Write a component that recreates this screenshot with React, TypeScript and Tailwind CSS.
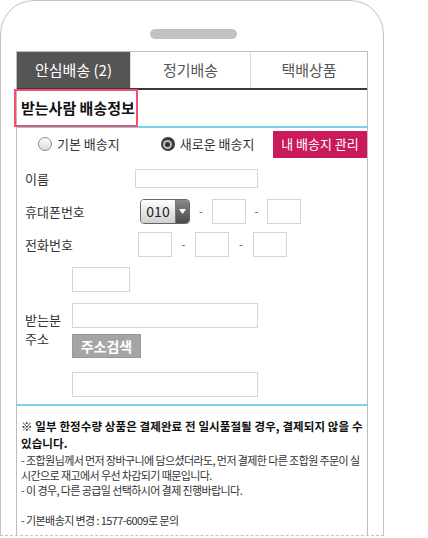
import React from 'react';

const font = { fontFamily: '"Noto Sans CJK KR", "Noto Sans", sans-serif' };

const Box = ({ className = '' }: { className?: string }) => (
  <div className={`border border-[#d6d6d6] bg-white ${className}`} />
);

const Dash = ({ w }: { w: string }) => (
  <div className={`${w} flex items-center justify-center text-[11px] text-[#555]`}>-</div>
);

const Radio = ({ checked }: { checked?: boolean }) =>
  checked ? (
    <span className="flex h-[14px] w-[14px] items-center justify-center rounded-full bg-[#3a3a3a]">
      <span className="flex h-[9px] w-[9px] items-center justify-center rounded-full bg-[#bdbdbd]">
        <span className="h-[5px] w-[5px] rounded-full bg-[#333]" />
      </span>
    </span>
  ) : (
    <span className="h-[14px] w-[14px] rounded-full border border-[#8a8a8a] bg-gradient-to-b from-white to-[#dcdcdc]" />
  );

export default function App() {
  return (
    <div className="h-[538px] w-[428px] bg-white" style={font}>
      <div className="flex h-[536px] w-[384px] flex-col overflow-hidden rounded-t-[34px] border border-[#c6c6c6] [border-bottom-style:dashed] px-[15px] pt-[28px]">
        <div className="ml-[134px] h-[10px] w-[87px] rounded-full bg-[#c2c2c2]" />

        <div className="mt-[12px] flex flex-1 flex-col border-x border-t border-[#bcbcbc]">
          {/* tabs */}
          <div className="flex h-[38px] border-b-2 border-[#3a3a3a] text-[15px]">
            <div className="flex w-[113px] items-center justify-center bg-[#555] text-white">안심배송 (2)</div>
            <div className="flex w-[120px] items-center justify-center border-l border-[#ddd] text-[#555]">정기배송</div>
            <div className="flex flex-1 items-center justify-center border-l border-[#ddd] text-[#555]">택배상품</div>
          </div>

          {/* header */}
          <div className="relative flex h-[38px] items-center border-b-2 border-[#74d5e6] pl-[4px]">
            <span className="text-[15px] font-bold text-[#111]">받는사람 배송정보</span>
            <div className="absolute left-[-3px] top-[-1px] h-[38px] w-[124px] border-2 border-[#f0506a]" />
          </div>

          {/* radios */}
          <div className="mt-[2px] flex h-[28px] items-center text-[13px] text-[#333]">
            <label className="ml-[21px] flex items-center gap-[5px]">
              <Radio />
              기본 배송지
            </label>
            <label className="ml-[41px] flex items-center gap-[5px]">
              <Radio checked />
              새로운 배송지
            </label>
            <button className="ml-auto flex h-[27px] w-[94px] items-center justify-center bg-[#c91a5b] text-[13px] text-white">
              내 배송지 관리
            </button>
          </div>

          {/* form */}
          <div className="flex flex-col pl-[8px] text-[13px] text-[#333]">
            <div className="mt-[11px] flex h-[19px] items-center">
              <div className="w-[110px]">이름</div>
              <Box className="h-[19px] w-[123px]" />
            </div>

            <div className="mt-[11px] flex h-[25px] items-center">
              <div className="w-[115px]">휴대폰번호</div>
              <div className="flex h-[25px] w-[50px] overflow-hidden rounded-[4px] border border-[#666]">
                <div className="flex w-[34px] items-center justify-center bg-gradient-to-b from-white to-[#cfcfcf] text-[14px] text-[#222]">
                  010
                </div>
                <div className="flex flex-1 items-center justify-center border-l border-[#777] bg-gradient-to-b from-[#8a8a8a] to-[#4a4a4a]">
                  <svg width="7" height="5" viewBox="0 0 7 5">
                    <path d="M0 0h7L3.5 5z" fill="#fff" />
                  </svg>
                </div>
              </div>
              <Dash w="w-[22px]" />
              <Box className="h-[25px] w-[34px]" />
              <Dash w="w-[21px]" />
              <Box className="h-[25px] w-[34px]" />
            </div>

            <div className="mt-[8px] flex h-[25px] items-center">
              <div className="w-[113px]">전화번호</div>
              <Box className="h-[25px] w-[34px]" />
              <Dash w="w-[23px]" />
              <Box className="h-[25px] w-[34px]" />
              <Dash w="w-[24px]" />
              <Box className="h-[25px] w-[34px]" />
            </div>

            <div className="mt-[10px] flex">
              <div className="w-[47px]" />
              <Box className="h-[25px] w-[58px]" />
            </div>

            <div className="mt-[11px] flex">
              <div className="flex w-[47px] flex-col pt-[7px] leading-[19px]">
                <span>받는분</span>
                <span>주소</span>
              </div>
              <div className="flex flex-col">
                <Box className="h-[25px] w-[186px]" />
                <button className="mt-[6px] flex h-[24px] w-[69px] items-center justify-center border border-[#999] bg-[#a5a5a5] text-[14px] font-bold text-white">
                  주소검색
                </button>
                <Box className="mt-[14px] h-[25px] w-[186px]" />
              </div>
            </div>
          </div>

          {/* notice */}
          <div className="mt-[7px] border-t-2 border-[#7fd7e3] pl-[4px] pt-[12px] text-[#333]">
            <p className="break-keep text-[11.5px] font-bold leading-[17px] tracking-[0.1px] text-[#111]">
              ※ 일부 한정수량 상품은 결제완료 전 일시품절될 경우, 결제되지 않을 수 있습니다.
            </p>
            <p className="mt-[1px] break-all text-[11px] leading-[15px] tracking-[-0.6px]">
              - 조합원님께서 먼저 장바구니에 담으셨더라도, 먼저 결제한 다른 조합원 주문이 실시간으로 재고에서 우선 차감되기 때문입니다.
            </p>
            <p className="text-[11px] leading-[15px] tracking-[-0.6px]">- 이 경우, 다른 공급일 선택하시어 결제 진행바랍니다.</p>
            <p className="mt-[15px] text-[11px] leading-[15px] tracking-[-0.6px]">- 기본배송지 변경 : 1577-6009로 문의</p>
          </div>
        </div>
      </div>
    </div>
  );
}
